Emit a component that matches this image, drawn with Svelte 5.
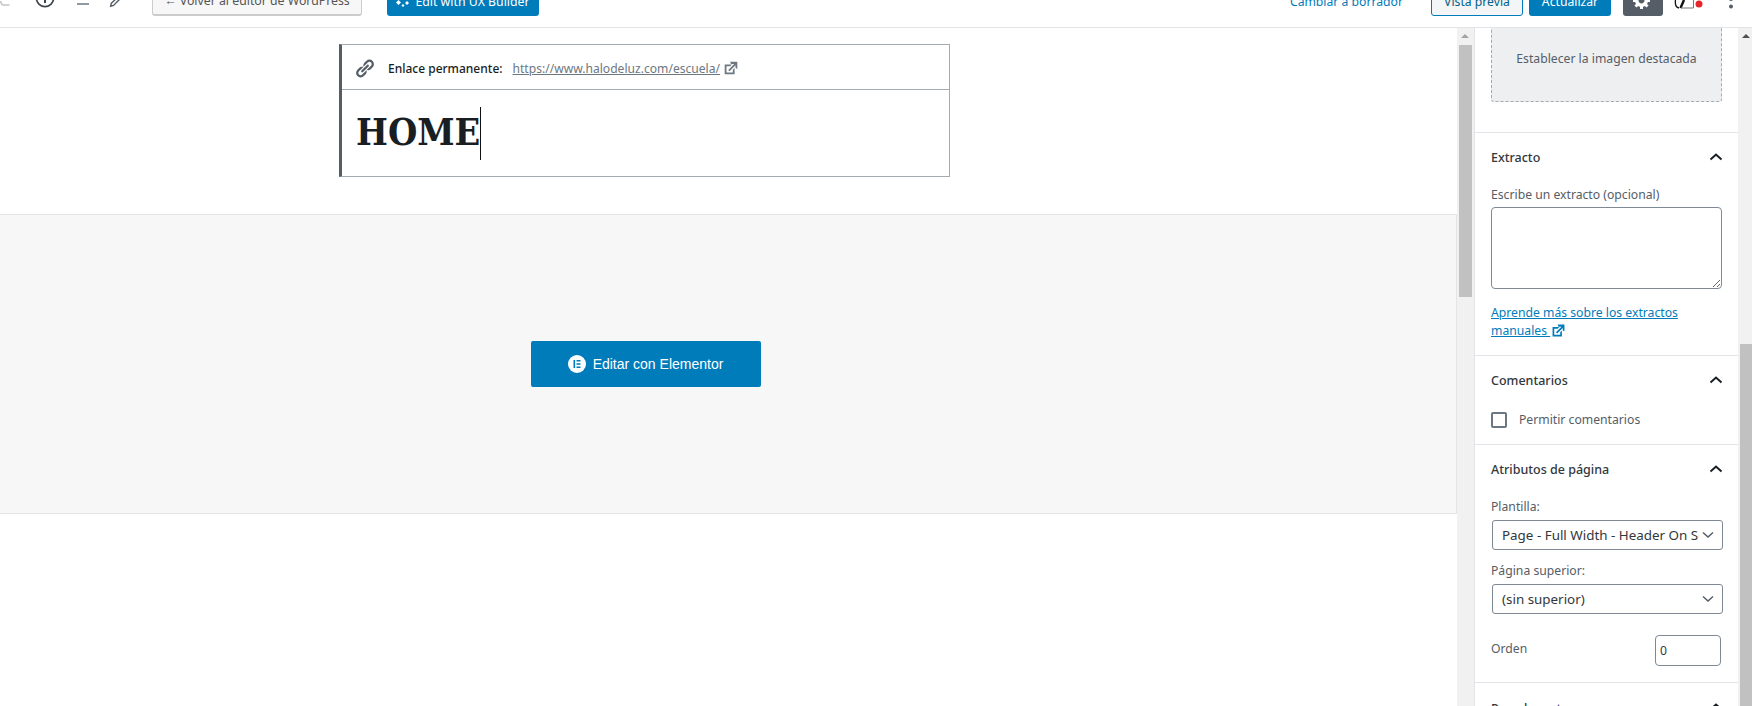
<script>
  const gear = 'M18 12h-2.18c-.17.7-.44 1.35-.81 1.93l1.54 1.54-2.1 2.1-1.54-1.54c-.58.36-1.23.63-1.91.79V19H8v-2.18c-.68-.16-1.33-.43-1.91-.79l-1.54 1.54-2.12-2.12 1.54-1.54c-.36-.58-.63-1.23-.79-1.91H1V9.03h2.17c.16-.7.44-1.35.8-1.94L2.43 5.55l2.1-2.1 1.54 1.54c.58-.37 1.24-.64 1.93-.81V2h3v2.18c.68.16 1.33.43 1.91.79l1.54-1.54 2.12 2.12-1.54 1.54c.36.59.64 1.24.8 1.94H18V12zm-8.5 1.5c1.66 0 3-1.34 3-3s-1.34-3-3-3-3 1.34-3 3 1.34 3 3 3z';
  const chain = 'M17.74 2.76c1.68 1.69 1.68 4.41 0 6.1l-1.53 1.52c-1.12 1.12-2.7 1.47-4.14 1.09l2.62-2.61.76-.77.76-.76c.84-.84.84-2.2 0-3.04-.84-.85-2.2-.85-3.04 0l-.77.76-3.38 3.38c-.37-1.44-.02-3.02 1.1-4.14l1.52-1.53c1.69-1.68 4.42-1.68 6.1 0zM8.59 13.43l5.34-5.34c.42-.42.42-1.1 0-1.52-.44-.43-1.13-.39-1.53 0l-5.33 5.34c-.42.42-.42 1.1 0 1.52.44.43 1.13.39 1.52 0zm-.76 2.29l4.14-4.15c.38 1.44.03 3.02-1.09 4.14l-1.52 1.53c-1.69 1.68-4.41 1.68-6.1 0-1.68-1.68-1.68-4.42 0-6.1l1.53-1.52c1.12-1.12 2.7-1.47 4.14-1.1l-4.14 4.15c-.85.84-.85 2.2 0 3.05.84.84 2.2.84 3.04 0z';
  const external = 'M9 3h8v8l-2-1V6.92l-6.6 6.6-1.42-1.42L13.6 5.5H10zm3 12v-3l2-2v7H3V6h8L9 8H5v7h7z';
</script>

<div class="page">
  <header class="topbar">
    <div class="tools">
      <svg class="undo" width="10" height="24" viewBox="0 0 10 24"><path d="M9.5 19H4Q.8 19 .8 15" fill="none" stroke="#c3c4c7" stroke-width="1.6"/></svg>
      <svg class="info" width="24" height="24" viewBox="0 0 24 24"><circle cx="12" cy="12" r="8.6" fill="none" stroke="#3c434a" stroke-width="1.7"/><path d="M12 10.5V17" stroke="#3c434a" stroke-width="2"/></svg>
      <svg class="list" width="24" height="24" viewBox="0 0 24 24"><path d="M6 18h12" stroke="#6c7781" stroke-width="1.5"/></svg>
      <svg class="pencil" width="24" height="24" viewBox="0 0 24 24"><path d="M7.6 20.2l.8-3L16 10l2 2-7.500 7.400z" fill="none" stroke="#555d66" stroke-width="1.4"/></svg>
    </div>
    <button class="btn btn-back">← Volver al editor de WordPress</button>
    <button class="btn btn-ux">
      <svg width="14" height="14" viewBox="0 0 14 14"><path d="M7 1l2.500 2.500L7 6 4.500 3.500zM2.500 6L5 8.500 2.500 11 0 8.500zM11 7l2 2-2 2-2-2zM7 10l1.500 1.500L7 13l-1.500-1.500z" fill="#fff"/></svg>
      Edit with UX Builder
    </button>

    <a class="draft">Cambiar a borrador</a>
    <button class="btn btn-preview">Vista previa</button>
    <button class="btn btn-update">Actualizar</button>
    <button class="btn btn-gear"><svg width="20" height="20" viewBox="0 0 20 20"><path d={gear} fill="#fff"/></svg></button>
    <svg class="avatar" width="30" height="24" viewBox="0 0 30 24"><path d="M2.500 14q-1 7 3.500 8" fill="none" stroke="#111" stroke-width="1.300"/><path d="M11 14l-3.500 8" stroke="#111" stroke-width="2.400"/><path d="M8 22h12.500v-8" fill="none" stroke="#777" stroke-width="1"/><circle cx="26" cy="18" r="3.500" fill="#e5262b"/></svg>
    <svg class="kebab" width="6" height="24" viewBox="0 0 6 24"><circle cx="3" cy="13" r="2" fill="#555d66"/><circle cx="3" cy="20.500" r="2" fill="#555d66"/></svg>
  </header>

  <div class="main">
    <div class="editor">
      <div class="title-box">
        <div class="permalink">
          <svg class="chain" width="21" height="21" viewBox="0 0 20 20"><path d={chain} fill="#555d66"/></svg>
          <strong>Enlace permanente:</strong>
          <a class="url">https://www.halodeluz.com/escuela/</a>
          <svg width="18" height="18" viewBox="0 0 20 20"><path d={external} fill="#6c7781"/></svg>
        </div>
        <div class="title"><span class="title-text">HOME</span><span class="caret"></span></div>
      </div>

      <div class="elementor">
        <button class="btn-elementor">
          <svg width="18" height="18" viewBox="0 0 18 18"><circle cx="9" cy="9" r="9" fill="#fff"/><path d="M5.500 5h1.600v8H5.500zM8.500 5h4v1.600h-4zM8.500 8.200h4v1.600h-4zM8.500 11.400h4V13h-4z" fill="#007cba"/></svg>
          Editar con Elementor
        </button>
      </div>
    </div>

    <div class="scrollbar scrollbar-editor">
      <span class="arrow arrow-muted"></span>
      <div class="thumb"></div>
    </div>

    <aside class="sidebar">
      <div class="featured-wrap">
        <div class="featured">Establecer la imagen destacada</div>
      </div>

      <section class="panel extract">
        <div class="panel-head">
          <h2>Extracto</h2>
          <svg width="24" height="24" viewBox="0 0 24 24"><path d="M6.500 14.500L12 9.500l5.500 5" fill="none" stroke="#191e23" stroke-width="2"/></svg>
        </div>
        <label class="field-label" for="excerpt">Escribe un extracto (opcional)</label>
        <textarea id="excerpt"></textarea>
        <a class="learn">Aprende más sobre los extractos<br>manuales <svg width="17" height="17" viewBox="0 0 20 20"><path d={external} fill="#007cba"/></svg></a>
      </section>

      <section class="panel comments">
        <div class="panel-head">
          <h2>Comentarios</h2>
          <svg width="24" height="24" viewBox="0 0 24 24"><path d="M6.500 14.500L12 9.500l5.500 5" fill="none" stroke="#191e23" stroke-width="2"/></svg>
        </div>
        <label class="check"><input type="checkbox"><span>Permitir comentarios</span></label>
      </section>

      <section class="panel attrs">
        <div class="panel-head">
          <h2>Atributos de página</h2>
          <svg width="24" height="24" viewBox="0 0 24 24"><path d="M6.500 14.500L12 9.500l5.500 5" fill="none" stroke="#191e23" stroke-width="2"/></svg>
        </div>
        <div class="field-label first">Plantilla:</div>
        <div class="select"><span>Page - Full Width - Header On Scroll</span><svg width="12" height="8" viewBox="0 0 12 8"><path d="M1 1.500l5 4.500 5-4.500" fill="none" stroke="#555d66" stroke-width="1.500"/></svg></div>
        <div class="field-label second">Página superior:</div>
        <div class="select"><span>(sin superior)</span><svg width="12" height="8" viewBox="0 0 12 8"><path d="M1 1.500l5 4.500 5-4.500" fill="none" stroke="#555d66" stroke-width="1.500"/></svg></div>
        <div class="order">
          <label for="order">Orden</label>
          <input id="order" type="text" value="0">
        </div>
      </section>

      <section class="panel last">
        <div class="panel-head">
          <h2>Page layout</h2>
          <svg width="24" height="24" viewBox="0 0 24 24"><path d="M6.500 14.500L12 9.500l5.500 5" fill="none" stroke="#191e23" stroke-width="2"/></svg>
        </div>
      </section>
    </aside>

    <div class="scrollbar scrollbar-side">
      <span class="arrow"></span>
      <div class="thumb"></div>
    </div>
  </div>
</div>

<style>
  :global(body) {
    margin: 0;
    background: #fff;
  }

  .page {
    width: 1752px;
    height: 706px;
    overflow: hidden;
    font-family: "Noto Sans", sans-serif;
    font-size: 12.2px;
    color: #191e23;
  }

  .topbar {
    display: flex;
    align-items: flex-end;
    padding-bottom: 11px;
    box-sizing: border-box;
    height: 28px;
    border-bottom: 1px solid #e2e4e7;
    overflow: hidden;
  }

  .tools {
    display: flex;
    margin-bottom: 6px;
  }

  .info { margin-left: 23px; }
  .list { margin-left: 14px; }
  .pencil { margin-left: 8px; }

  .btn {
    flex: none;
    height: 33px;
    padding: 3px 0 0;
    border-radius: 3px;
    font: inherit;
    box-sizing: border-box;
  }

  .btn-back {
    width: 210px;
    margin-left: 25px;
    background: #f7f7f7;
    border: 1px solid #ccc;
    border-bottom-width: 2px;
    color: #555;
    font-size: 12.3px;
  }

  .btn-ux {
    display: flex;
    align-items: center;
    justify-content: center;
    gap: 5px;
    width: 152px;
    margin-left: 25px;
    background: #007cba;
    border: none;
    color: #fff;
    font-size: 12.3px;
  }

  .draft {
    margin-left: auto;
    margin-bottom: 7px;
    color: #007cba;
    line-height: 14px;
  }

  .btn-preview {
    width: 92px;
    margin-left: 28px;
    background: #f3f5f6;
    border: 1px solid #007cba;
    color: #016087;
  }

  .btn-update {
    width: 82px;
    margin-left: 6px;
    background: #007cba;
    border: none;
    color: #fff;
  }

  .btn-gear {
    display: flex;
    align-items: center;
    justify-content: center;
    width: 40px;
    margin-left: 12px;
    padding: 0 2px 0 0;
    background: #555d66;
    border: none;
  }

  .avatar {
    flex: none;
    margin-left: 10px;
    margin-bottom: 6px;
  }

  .kebab {
    flex: none;
    margin-left: 25px;
    margin-right: 18px;
    margin-bottom: 6px;
  }

  .main {
    display: flex;
    height: 678px;
  }

  .editor {
    width: 1457px;
    flex: none;
  }

  .title-box {
    width: 611px;
    margin: 16px 0 0 339px;
    box-sizing: border-box;
    border: 1px solid #a2aab2;
    border-left: 3px solid #555d66;
  }

  .permalink {
    display: flex;
    align-items: center;
    height: 42px;
    padding-top: 2px;
    border-bottom: 1px solid #a2aab2;
    font-size: 12px;
  }

  .chain { margin-left: 12px; }

  .permalink strong {
    margin-left: 13px;
    font-weight: 500;
    color: #191e23;
  }

  .url {
    margin: 0 2px 0 10px;
    font-size: 12.1px;
    color: #6c7781;
    text-decoration: underline;
  }

  .title {
    display: flex;
    align-items: center;
    height: 86px;
    padding-left: 14px;
  }

  .title-text {
    margin-top: -3px;
    font-family: "DejaVu Serif Condensed", "DejaVu Serif", serif;
    font-stretch: condensed;
    font-weight: 700;
    font-size: 37.5px;
    color: #191e23;
  }

  .caret {
    width: 1px;
    height: 53px;
    background: #111;
  }

  .elementor {
    display: flex;
    align-items: center;
    justify-content: center;
    height: 300px;
    margin-top: 37px;
    padding-right: 165px;
    box-sizing: border-box;
    background: #f7f7f7;
    border-top: 1px solid #e2e4e7;
    border-bottom: 1px solid #e2e4e7;
    border-right: 1px solid #e2e4e7;
  }

  .btn-elementor {
    display: flex;
    align-items: center;
    justify-content: center;
    gap: 7px;
    width: 230px;
    height: 46px;
    padding: 0;
    background: #007cba;
    border: none;
    border-radius: 2px;
    color: #fff;
    font-family: "Liberation Sans", sans-serif;
    font-size: 14px;
  }

  .scrollbar {
    position: relative;
    flex: none;
    background: #f1f1f1;
  }

  .scrollbar-editor {
    width: 17px;
  }

  .scrollbar-side {
    width: 14px;
  }

  .arrow {
    position: absolute;
    top: 6px;
    left: 4px;
    border-left: 4px solid transparent;
    border-right: 4px solid transparent;
    border-bottom: 4px solid #505050;
  }

  .arrow-muted {
    border-bottom-color: #a3a3a3;
  }

  .thumb {
    position: absolute;
    background: #c1c1c1;
  }

  .scrollbar-editor .thumb {
    left: 2px;
    right: 2px;
    top: 17px;
    height: 252px;
  }

  .scrollbar-side .thumb {
    left: 2px;
    right: 0;
    top: 316px;
    bottom: 0;
  }

  .sidebar {
    flex: none;
    width: 264px;
    box-sizing: border-box;
    border-left: 1px solid #e2e4e7;
    overflow: hidden;
  }

  .featured-wrap {
    padding: 0 16px 30px;
  }

  .featured {
    display: flex;
    align-items: center;
    justify-content: center;
    height: 88px;
    margin-top: -14px;
    box-sizing: border-box;
    background: #edeff0;
    border: 1px dashed #a2aab2;
    border-radius: 3px;
    color: #555d66;
  }

  .panel {
    padding: 0 16px;
    border-top: 1px solid #e2e4e7;
  }

  .panel-head {
    display: flex;
    align-items: center;
    justify-content: space-between;
    height: 48px;
  }

  .panel-head svg {
    margin-right: -6px;
  }

  h2 {
    margin: 0;
    font-size: 12.5px;
    font-weight: 500;
    color: #32373c;
  }

  .last h2 {
    margin-top: 2px;
  }

  .field-label {
    display: block;
    line-height: 18px;
    color: #555d66;
  }

  .extract .field-label {
    margin-top: 5px;
  }

  textarea {
    display: block;
    width: 231px;
    height: 82px;
    margin: 3px 0 15px;
    box-sizing: border-box;
    border: 1px solid #7e8993;
    border-radius: 4px;
    background: #fff;
  }

  .learn {
    display: block;
    padding-bottom: 15px;
    line-height: 18px;
    color: #007cba;
    text-decoration: underline;
  }

  .learn svg {
    vertical-align: -4px;
  }

  .comments {
    padding-bottom: 16px;
  }

  .check {
    display: flex;
    align-items: center;
    gap: 12px;
    margin-top: 7px;
    color: #555d66;
  }

  .check input {
    appearance: none;
    width: 16px;
    height: 16px;
    margin: 0;
    border: 2px solid #6c7781;
    border-radius: 2px;
  }

  .attrs {
    padding-bottom: 16px;
  }

  .first { margin-top: 5px; }
  .second { margin-top: 12px; }

  .select {
    display: flex;
    align-items: center;
    justify-content: space-between;
    width: 231px;
    height: 30px;
    margin: 4px 0 0 1px;
    padding: 0 8px 0 9px;
    box-sizing: border-box;
    border: 1px solid #7e8993;
    border-radius: 3px;
    color: #32373c;
    font-size: 13.4px;
  }

  .select span {
    width: 197px;
    overflow: hidden;
    white-space: nowrap;
  }

  .order {
    display: flex;
    justify-content: space-between;
    margin-top: 21px;
    color: #555d66;
  }

  .order label {
    line-height: 28px;
  }

  .order input {
    width: 66px;
    height: 31px;
    margin-right: 1px;
    padding: 0 4px;
    box-sizing: border-box;
    border: 1px solid #7e8993;
    border-radius: 4px;
    color: #32373c;
    font: inherit;
  }
</style>
